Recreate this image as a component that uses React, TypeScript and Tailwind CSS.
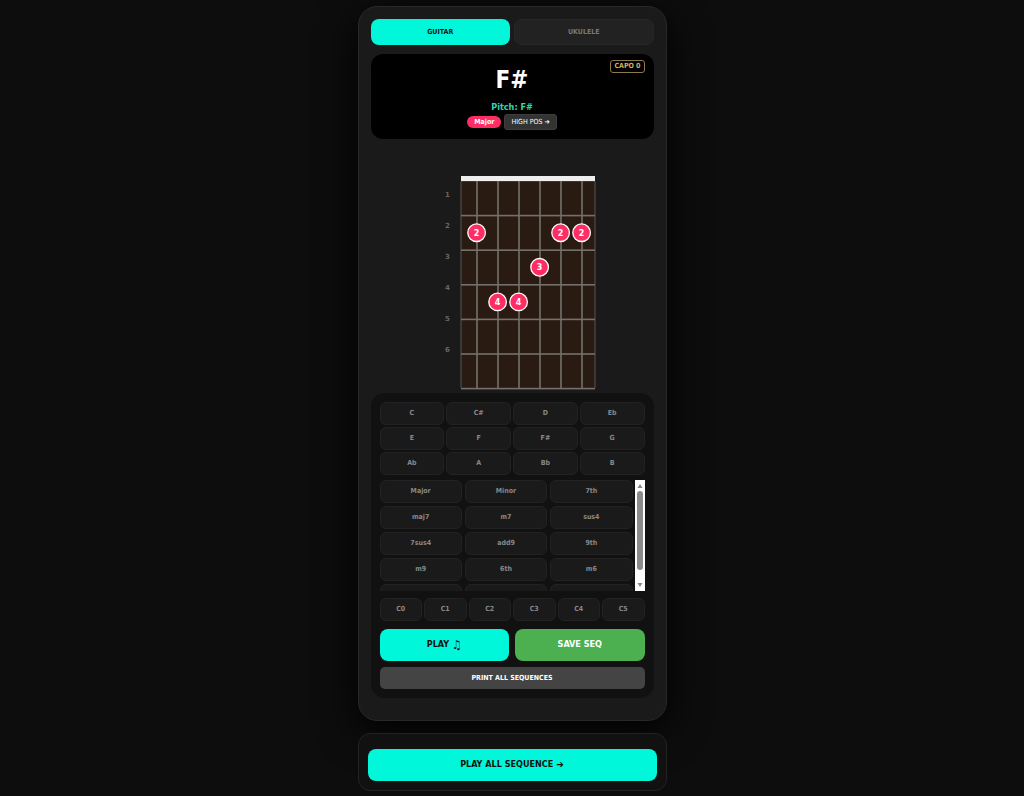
import clsx from "clsx";
import type { ReactNode } from "react";

const NOTES = ["C", "C#", "D", "Eb", "E", "F", "F#", "G", "Ab", "A", "Bb", "B"];
const CHORD_TYPES = [
  "Major",
  "Minor",
  "7th",
  "maj7",
  "m7",
  "sus4",
  "7sus4",
  "add9",
  "9th",
  "m9",
  "6th",
  "m6",
  "dim7",
  "m7b5",
  "aug",
];
const CAPOS = ["C0", "C1", "C2", "C3", "C4", "C5"];
const FRETS = [1, 2, 3, 4, 5, 6];
const STRINGS = [0, 1, 2, 3, 4, 5];

type Finger = {
  string: number;
  fret: number;
};

const FINGERS: Finger[] = [
  { string: 0, fret: 2 },
  { string: 1, fret: 4 },
  { string: 2, fret: 4 },
  { string: 3, fret: 3 },
  { string: 4, fret: 2 },
  { string: 5, fret: 2 },
];

function OptionButton({ children }: { children: ReactNode }) {
  return (
    <button
      type="button"
      className="flex h-[23px] items-center justify-center rounded-md border border-[#222] bg-[#1a1a1a] text-[7px] font-bold text-[#888]"
    >
      {children}
    </button>
  );
}

type ActionButtonProps = {
  children: ReactNode;
  className?: string;
};

function ActionButton({ children, className }: ActionButtonProps) {
  return (
    <button
      type="button"
      className={clsx(
        "flex h-8 w-full items-center justify-center rounded-lg text-[9px] font-bold",
        className,
      )}
    >
      {children}
    </button>
  );
}

function Fretboard() {
  return (
    <div className="flex justify-center gap-2 pl-[15px] font-['DejaVu_Sans',sans-serif]">
      <ol className="mt-1 w-2 text-center text-[7px] font-bold text-[#666]">
        {FRETS.map((fret) => (
          <li key={fret} className="flex h-[31px] items-center justify-center">
            {fret}
          </li>
        ))}
      </ol>
      <svg width="136" height="214" viewBox="0 0 136 214" role="img" aria-label="F# major chord">
        <rect x="1" y="5" width="134" height="207.5" rx="1" fill="#2a1b12" stroke="#555" />
        {STRINGS.map((s) => (
          <rect key={s} x={16.2 + s * 21} y="5" width="1.6" height="207.5" fill="#74706d" />
        ))}
        {FRETS.map((fret) => (
          <rect key={fret} x="1" y={4.2 + fret * 34.6} width="134" height="1.6" fill="#74706d" />
        ))}
        <rect x="1" y="0" width="134" height="5" fill="#eee" />
        {FINGERS.map(({ string, fret }) => {
          const x = 16.6 + string * 21;
          const y = fret * 34.6 - 12.5;
          return (
            <g key={string}>
              <circle cx={x} cy={y} r="8.8" fill="#ff2d63" stroke="#fff" strokeWidth="1.3" />
              <text x={x} y={y + 3} textAnchor="middle" fill="#fff" fontSize="8" fontWeight="700">
                {fret}
              </text>
            </g>
          );
        })}
      </svg>
    </div>
  );
}

function ScrollTrack() {
  return (
    <div className="flex w-[10px] flex-col items-center justify-between bg-white py-1" aria-hidden="true">
      <svg width="6" height="4" viewBox="0 0 6 4">
        <path d="M3 0 5.5 4H.5Z" fill="#888" />
      </svg>
      <div className="mt-[3px] mb-auto h-[79px] w-[6px] rounded-full bg-[#8b8b8b]" />
      <svg width="6" height="4" viewBox="0 0 6 4">
        <path d="M.5 0h5L3 4Z" fill="#888" />
      </svg>
    </div>
  );
}

export default function App() {
  return (
    <div className="flex min-h-screen flex-col items-center gap-3 bg-[#0d0d0d] px-3 pt-1.5 pb-1 font-['DejaVu_Sans_Condensed','Noto_Sans',sans-serif] text-white">
      <main className="w-full max-w-[309px] rounded-[19px] border border-[#282828] bg-[#1a1a1a] px-3 pt-3 pb-[22px] shadow-[0_10px_40px_#000]">
        <div className="grid grid-cols-2 gap-1">
          <button type="button" className="h-[26px] rounded-lg bg-[#00f7d9] text-[7px] font-bold text-[#111]">
            GUITAR
          </button>
          <button
            type="button"
            className="h-[26px] rounded-lg border border-[#272727] bg-[#222] text-[7px] font-bold text-[#777]"
          >
            UKULELE
          </button>
        </div>

        <section className="relative mt-[9px] flex h-[85px] flex-col items-center rounded-xl bg-black pt-2">
          <span className="absolute top-1.5 right-[9px] flex h-[13px] items-center rounded-[3px] border border-[#8f7a4c] px-[3px] text-[7px] font-bold text-[#d4ae5c]">
            CAPO 0
          </span>
          <h1 className="text-[24px] leading-9 font-bold">F#</h1>
          <p className="mt-[3px] text-[9px] leading-3 font-bold text-[#35d6ae]">Pitch: F#</p>
          <div className="mt-px flex items-center gap-[3px]">
            <span className="flex h-3 items-center rounded-full bg-[#ff2d63] px-[7px] text-[7px] font-bold">Major</span>
            <button
              type="button"
              className="flex h-4 items-center gap-0.5 rounded-[3px] border border-[#3d3d3d] bg-[#333] px-1.5 text-[7px]"
            >
              HIGH POS <span className="font-bold">➔</span>
            </button>
          </div>
        </section>

        <div className="mt-[37px]">
          <Fretboard />
        </div>

        <section className="mt-[3px] flex flex-col rounded-[14px] bg-[#111] p-[9px]">
          <div className="grid grid-cols-4 gap-0.5">
            {NOTES.map((note) => (
              <OptionButton key={note}>{note}</OptionButton>
            ))}
          </div>
          <div className="mt-[5px] flex h-[111px] gap-0.5">
            <div className="grid flex-1 auto-rows-min grid-cols-3 gap-[3px] overflow-y-auto [scrollbar-width:none]">
              {CHORD_TYPES.map((type) => (
                <OptionButton key={type}>{type}</OptionButton>
              ))}
            </div>
            <ScrollTrack />
          </div>
          <div className="mt-[7px] grid grid-cols-6 gap-0.5">
            {CAPOS.map((capo) => (
              <OptionButton key={capo}>{capo}</OptionButton>
            ))}
          </div>
          <div className="mt-2 grid grid-cols-2 gap-1.5">
            <ActionButton className="gap-[3px] bg-[#00f7d9] text-[#111]">
              PLAY <span className="text-[12px] leading-none">♫</span>
            </ActionButton>
            <ActionButton className="bg-[#4caf50]">SAVE SEQ</ActionButton>
          </div>
          <button type="button" className="mt-1.5 h-[22px] rounded-[5px] bg-[#444] text-[7px] font-bold">
            PRINT ALL SEQUENCES
          </button>
        </section>
      </main>

      <footer className="w-full max-w-[309px] rounded-xl border border-[#222] bg-[#111] px-[9px] pt-[15px] pb-[9px]">
        <ActionButton className="gap-[3px] bg-[#00f7d9] text-[#111]">
          PLAY ALL SEQUENCE <span className="text-[10px] leading-none">➔</span>
        </ActionButton>
      </footer>
    </div>
  );
}
